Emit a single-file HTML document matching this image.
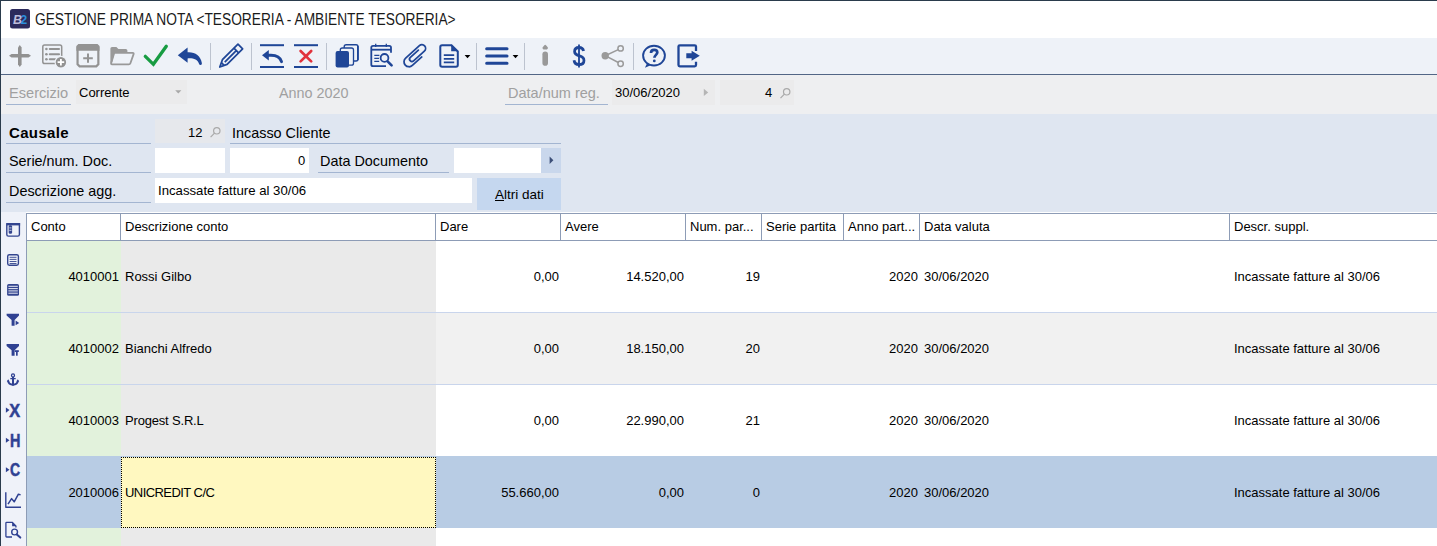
<!DOCTYPE html>
<html><head><meta charset="utf-8">
<style>
*{margin:0;padding:0;box-sizing:border-box}
html,body{width:1437px;height:546px;overflow:hidden;background:#fff;font-family:"Liberation Sans",sans-serif;color:#000}
.a{position:absolute}
.t{position:absolute;white-space:nowrap;line-height:1}
#frameT{left:0;top:0;width:1437px;height:1px;background:#2a3b4c}
#frameL{left:0;top:0;width:1px;height:546px;background:#2a3b4c}
#title{left:1px;top:1px;width:1436px;height:37px;background:#fff}
#tb{left:1px;top:38px;width:1436px;height:36px;background:#eef2f8}
#tbline{left:1px;top:74px;width:1436px;height:1px;background:#526686}
#band{left:1px;top:75px;width:1436px;height:39px;background:#eeeff1}
#form{left:1px;top:114px;width:1436px;height:98px;background:#dfe6f1}
#side{left:1px;top:212px;width:25px;height:334px;background:#eff2f9}
.sep{position:absolute;top:46px;width:1px;height:22px;background:#c3c9d3}
.lbl{font-size:14.4px;color:#000}
.ul{position:absolute;height:1px;background:#a3b5d1}
.g{font-size:13px}
svg{position:absolute;overflow:visible}
</style></head><body>
<div class="a" id="title"></div>
<div class="a" id="tb"></div>
<div class="a" id="tbline"></div>
<div class="a" id="band"></div>
<div class="a" id="form"></div>
<div class="a" id="side"></div>
<div class="a" id="frameT"></div>
<div class="a" id="frameL"></div>

<!-- title -->
<div class="t" style="left:35px;top:12px;font-size:16px;color:#1a1a1a;transform:scaleX(0.858);transform-origin:0 0">GESTIONE PRIMA NOTA &lt;TESORERIA - AMBIENTE TESORERIA&gt;</div>

<!-- toolbar separators -->

<!-- band row -->
<div class="t lbl" style="left:9px;top:86px;color:#a0a0a0;font-size:14.6px">Esercizio</div>
<div class="ul" style="left:6px;top:104px;width:65px"></div>
<div class="a" style="left:76px;top:80px;width:111px;height:24px;background:#ebebec"></div>
<div class="t" style="left:79px;top:86px;font-size:13px">Corrente</div>
<div class="t lbl" style="left:279px;top:86px;color:#a0a0a0">Anno 2020</div>
<div class="t lbl" style="left:508px;top:86px;color:#a0a0a0;font-size:14.5px">Data/num reg.</div>
<div class="ul" style="left:505px;top:104px;width:103px"></div>
<div class="a" style="left:612px;top:80px;width:103px;height:25px;background:#ebebec"></div>
<div class="t" style="left:615px;top:86px;font-size:13px">30/06/2020</div>
<div class="a" style="left:720px;top:80px;width:74px;height:25px;background:#ebebec"></div>
<div class="t" style="left:765px;top:86px;font-size:13px">4</div>

<!-- form -->
<div class="t lbl" style="left:9px;top:125px;font-weight:bold;font-size:15px;letter-spacing:0.35px">Causale</div>
<div class="ul" style="left:6px;top:143px;width:145px"></div>
<div class="t lbl" style="left:9px;top:154px">Serie/num. Doc.</div>
<div class="ul" style="left:6px;top:172px;width:145px"></div>
<div class="t lbl" style="left:9px;top:184px">Descrizione agg.</div>
<div class="ul" style="left:6px;top:202px;width:145px"></div>

<div class="a" style="left:155px;top:119px;width:70px;height:24px;background:#e6e8ec"></div>
<div class="t" style="left:188px;top:126px;font-size:13px">12</div>
<div class="t lbl" style="left:232px;top:126px">Incasso Cliente</div>
<div class="ul" style="left:230px;top:143px;width:331px"></div>

<div class="a" style="left:155px;top:148px;width:70px;height:25px;background:#fff"></div>
<div class="a" style="left:230px;top:148px;width:79px;height:25px;background:#fff"></div>
<div class="t" style="left:298px;top:154px;font-size:13px">0</div>
<div class="t lbl" style="left:320px;top:154px">Data Documento</div>
<div class="ul" style="left:318px;top:172px;width:131px"></div>
<div class="a" style="left:454px;top:148px;width:87px;height:25px;background:#fff"></div>
<div class="a" style="left:541px;top:148px;width:20px;height:25px;background:#c9d7ec"></div>

<div class="a" style="left:155px;top:178px;width:317px;height:25px;background:#fff"></div>
<div class="t" style="left:158px;top:184px;font-size:13.2px">Incassate fatture al 30/06</div>
<div class="a" style="left:477px;top:178px;width:84px;height:32px;background:#c5d7ef"></div>
<div class="t" style="left:495px;top:188px;font-size:13.5px"><u>A</u>ltri dati</div>

<!-- grid -->
<div class="a" style="left:26px;top:213px;width:1px;height:333px;background:#8d9cb6"></div>
<div class="a" style="left:27px;top:213px;width:1410px;height:1px;background:#8d9cb6"></div>
<div class="a" style="left:27px;top:214px;width:1410px;height:26px;background:#fff"></div>
<div class="a" style="left:27px;top:240px;width:1410px;height:1px;background:#8d9cb6"></div>
<div class="a" style="left:120px;top:214px;width:1px;height:26px;background:#8d9cb6"></div>
<div class="a" style="left:435px;top:214px;width:1px;height:26px;background:#8d9cb6"></div>
<div class="a" style="left:560px;top:214px;width:1px;height:26px;background:#8d9cb6"></div>
<div class="a" style="left:685px;top:214px;width:1px;height:26px;background:#8d9cb6"></div>
<div class="a" style="left:761px;top:214px;width:1px;height:26px;background:#8d9cb6"></div>
<div class="a" style="left:843px;top:214px;width:1px;height:26px;background:#8d9cb6"></div>
<div class="a" style="left:919px;top:214px;width:1px;height:26px;background:#8d9cb6"></div>
<div class="a" style="left:1229px;top:214px;width:1px;height:26px;background:#8d9cb6"></div>
<div class="t g" style="left:31px;top:220px">Conto</div>
<div class="t g" style="left:125px;top:220px">Descrizione conto</div>
<div class="t g" style="left:440px;top:220px">Dare</div>
<div class="t g" style="left:565px;top:220px">Avere</div>
<div class="t g" style="left:690px;top:220px">Num. par...</div>
<div class="t g" style="left:766px;top:220px">Serie partita</div>
<div class="t g" style="left:848px;top:220px">Anno part...</div>
<div class="t g" style="left:924px;top:220px">Data valuta</div>
<div class="t g" style="left:1234px;top:220px">Descr. suppl.</div>
<div class="a" style="left:27px;top:241px;width:1410px;height:71px;background:#ffffff"></div>
<div class="a" style="left:27px;top:241px;width:94px;height:71px;background:#e2f2dc"></div>
<div class="a" style="left:121px;top:241px;width:315px;height:71px;background:#eaeaea"></div>
<div class="a" style="left:27px;top:312px;width:1410px;height:1px;background:#c9d5ec"></div>
<div class="a" style="left:27px;top:313px;width:1410px;height:71px;background:#f1f1f1"></div>
<div class="a" style="left:27px;top:313px;width:94px;height:71px;background:#e2f2dc"></div>
<div class="a" style="left:121px;top:313px;width:315px;height:71px;background:#eaeaea"></div>
<div class="a" style="left:27px;top:384px;width:1410px;height:1px;background:#c9d5ec"></div>
<div class="a" style="left:27px;top:385px;width:1410px;height:71px;background:#ffffff"></div>
<div class="a" style="left:27px;top:385px;width:94px;height:71px;background:#e2f2dc"></div>
<div class="a" style="left:121px;top:385px;width:315px;height:71px;background:#eaeaea"></div>
<div class="a" style="left:27px;top:456px;width:1410px;height:1px;background:#c9d5ec"></div>
<div class="a" style="left:27px;top:456px;width:1410px;height:72px;background:#b8cce4"></div>
<div class="a" style="left:121px;top:457px;width:315px;height:71px;background:#fff8c0;border:1px dotted #000"></div>
<div class="a" style="left:27px;top:528px;width:1410px;height:18px;background:#ffffff"></div>
<div class="a" style="left:27px;top:528px;width:94px;height:18px;background:#e2f2dc"></div>
<div class="a" style="left:121px;top:528px;width:315px;height:18px;background:#eaeaea"></div>
<div class="t g" style="right:1318px;top:270px">4010001</div>
<div class="t g" style="left:125px;top:270px">Rossi Gilbo</div>
<div class="t g" style="right:878px;top:270px">0,00</div>
<div class="t g" style="right:753px;top:270px">14.520,00</div>
<div class="t g" style="right:677px;top:270px">19</div>
<div class="t g" style="right:519px;top:270px">2020</div>
<div class="t g" style="left:924px;top:270px">30/06/2020</div>
<div class="t g" style="left:1234px;top:270px">Incassate fatture al 30/06</div>
<div class="t g" style="right:1318px;top:342px">4010002</div>
<div class="t g" style="left:125px;top:342px">Bianchi Alfredo</div>
<div class="t g" style="right:878px;top:342px">0,00</div>
<div class="t g" style="right:753px;top:342px">18.150,00</div>
<div class="t g" style="right:677px;top:342px">20</div>
<div class="t g" style="right:519px;top:342px">2020</div>
<div class="t g" style="left:924px;top:342px">30/06/2020</div>
<div class="t g" style="left:1234px;top:342px">Incassate fatture al 30/06</div>
<div class="t g" style="right:1318px;top:414px">4010003</div>
<div class="t g" style="left:125px;top:414px;letter-spacing:-0.18px">Progest S.R.L</div>
<div class="t g" style="right:878px;top:414px">0,00</div>
<div class="t g" style="right:753px;top:414px">22.990,00</div>
<div class="t g" style="right:677px;top:414px">21</div>
<div class="t g" style="right:519px;top:414px">2020</div>
<div class="t g" style="left:924px;top:414px">30/06/2020</div>
<div class="t g" style="left:1234px;top:414px">Incassate fatture al 30/06</div>
<div class="t g" style="right:1318px;top:486px">2010006</div>
<div class="t g" style="left:125px;top:486px;letter-spacing:-0.56px">UNICREDIT C/C</div>
<div class="t g" style="right:878px;top:486px">55.660,00</div>
<div class="t g" style="right:753px;top:486px">0,00</div>
<div class="t g" style="right:677px;top:486px">0</div>
<div class="t g" style="right:519px;top:486px">2020</div>
<div class="t g" style="left:924px;top:486px">30/06/2020</div>
<div class="t g" style="left:1234px;top:486px">Incassate fatture al 30/06</div>
<!-- icons overlay -->
<svg style="left:0;top:0" width="1437" height="546" viewBox="0 0 1437 546">
<!-- logo -->
<rect x="10" y="9" width="20" height="19.5" rx="2.5" fill="#2b2a5c"/>
<text x="13" y="23.5" font-family="Liberation Sans" font-size="12.5" font-style="italic" font-weight="bold" fill="#bdbcda">B</text>
<text x="20.4" y="23.5" font-family="Liberation Sans" font-size="12" font-weight="bold" fill="#2b8fdb">2</text>
<g fill="#919191" stroke="none">
 <!-- plus -->
 <polygon points="9,55.8 11.5,54 28.5,54 31,55.8 28.5,57.6 11.5,57.6"/>
 <polygon points="19.8,45 21.6,47.5 21.6,64.5 19.8,67 18,64.5 18,47.5"/>
</g>
<!-- list plus -->
<g fill="none" stroke="#929292">
 <path d="M56,63.6 L44.6,63.6 Q42.8,63.6 42.8,61.8 L42.8,46.8 Q42.8,45 44.6,45 L59.9,45 Q61.7,45 61.7,46.8 L61.7,56.5" stroke-width="1.5"/>
 <path d="M49.8,49 L59,49 M49.8,54.2 L59,54.2 M49.8,59.2 L55.2,59.2" stroke-width="2.1" stroke-linecap="round"/>
</g>
<g fill="#929292">
 <circle cx="46.4" cy="49" r="1.3"/><circle cx="46.4" cy="54.2" r="1.3"/><circle cx="46.4" cy="59.2" r="1.3"/>
 <circle cx="60.9" cy="62.2" r="5.8" stroke="#eef2f8" stroke-width="1.2"/>
</g>
<path d="M60.9,58.9 L60.9,65.5 M57.6,62.2 L64.2,62.2" stroke="#fff" stroke-width="1.8"/>
<!-- calendar plus -->
<path d="M79.6,45.25 L96.3,45.25 L98.35,47.3 L98.35,64.3 L96.3,66.35 L79.6,66.35 L77.55,64.3 L77.55,47.3 Z" fill="none" stroke="#939393" stroke-width="2.2"/>
<polygon points="78.4,44.1 97.5,44.1 99.5,46.1 99.5,50.8 76.4,50.8 76.4,46.1" fill="#939393"/>
<path d="M88,53.6 L88,62.8 M83.2,58.2 L92.8,58.2" stroke="#939393" stroke-width="2"/>
<!-- folder -->
<path d="M110.4,63.6 L110.4,48.6 Q110.4,47 112,47 L116.4,47 L118.4,49 L125.8,49 Q127.4,49 127.4,50.6 L127.4,52.2 L114.6,52.2 L112.2,62 Z" fill="#999"/>
<path d="M114.2,52.9 L132.8,52.9 Q134,52.9 133.6,54.1 L130.4,63.2 Q130,64.3 128.8,64.3 L112,64.3 Q110.8,64.3 111.2,63.1 Z" fill="none" stroke="#999" stroke-width="1.8"/>
<!-- check -->
<polyline points="145.3,56.3 153.4,64.3 166.3,46.3" fill="none" stroke="#179c42" stroke-width="3.3" stroke-linecap="round" stroke-linejoin="miter"/>
<!-- undo -->
<path d="M177.8,55.2 L187.6,47.6 L187.6,52.3 C194.8,51.8 200.6,55.4 201.9,63.2 Q202.1,64.9 200.6,65 Q199.4,65.1 199.1,63.9 C197.6,59.6 193.6,58 187.6,58.4 L187.6,62.7 Z" fill="#1f4697"/>
<!-- separators -->
<g fill="#bcc3cf">
 <rect x="210" y="43" width="1" height="27"/>
 <rect x="251" y="43" width="1" height="27"/>
 <rect x="326" y="43" width="1" height="27"/>
 <rect x="476" y="43" width="1" height="27"/>
 <rect x="524" y="43" width="1" height="27"/>
 <rect x="633" y="43" width="1" height="27"/>
</g>
<!-- pencil -->
<g transform="translate(219.8,67) rotate(-45)" fill="none" stroke="#1f4697" stroke-width="1.75" stroke-linejoin="round">
 <path d="M0,0 L7,-3.3 L29,-3.3 L29,3.3 L7,3.3 Z"/>
 <path d="M23.3,-3.3 L23.3,3.3 M7,0 L23.3,0 M4.2,-2 L4.2,2"/>
</g>
<!-- undo lines -->
<g fill="#1f4697">
 <rect x="260" y="44.2" width="24" height="2"/>
 <rect x="260" y="66" width="24" height="2"/>
 <polygon points="262,55.2 268.8,50 268.8,60.4"/>
 <path d="M268,55.3 C274.5,54.6 280,56.5 281.5,61.6" fill="none" stroke="#1f4697" stroke-width="3" stroke-linecap="round"/>
 <rect x="294" y="44.2" width="24" height="2"/>
 <rect x="294" y="66" width="24" height="2"/>
</g>
<path d="M300.6,51 L311.2,61.4 M311.2,51 L300.6,61.4" stroke="#e1333d" stroke-width="2.7" stroke-linecap="round"/>
<!-- copies -->
<rect x="344.2" y="44.8" width="13.8" height="16.2" rx="2" fill="#eef2f8" stroke="#1f4697" stroke-width="1.4"/>
<rect x="357" y="46" width="1.7" height="14" fill="#1f4697"/>
<rect x="340.3" y="48" width="13.2" height="17.2" rx="2" fill="#eef2f8" stroke="#1f4697" stroke-width="1.3"/>
<rect x="335.6" y="51.1" width="13.4" height="16.5" rx="2" fill="#1f4697"/>
<!-- calendar search -->
<g fill="none" stroke="#1f4697">
 <path d="M386,66.2 L373,66.2 Q371.3,66.2 371.3,64.5 L371.3,47.5 Q371.3,45.8 373,45.8 L389.3,45.8 Q391,45.8 391,47.5 L391,52.8" stroke-width="1.8"/>
 <path d="M371.3,49.7 L391,49.7" stroke-width="1.8"/>
 <path d="M375.7,43.8 L375.7,47 M386.3,43.8 L386.3,47" stroke-width="1.3"/>
 <path d="M374.3,55.4 L379.4,55.4 M374.3,58.3 L379,58.3 M374.3,61.4 L379.2,61.4" stroke-width="1.3"/>
 <circle cx="384.5" cy="57.9" r="3.9" stroke-width="1.8"/>
 <path d="M387.6,61.3 L391.6,65.3" stroke-width="2.6" stroke-linecap="round"/>
</g>
<!-- paperclip -->
<g transform="translate(409,61.75) rotate(-42)" fill="none" stroke="#1f4697" stroke-width="1.75" stroke-linecap="round">
 <path d="M12.7,5 L0,5 A5,5 0 0 1 0,-5 L18.5,-5 A3.7,3.7 0 0 1 18.5,2.4 L4,2.4 A2.4,2.4 0 0 1 4,-2.4 L14.8,-2.4"/>
</g>
<!-- doc -->
<path d="M440.3,47 Q440.3,45.2 442.1,45.2 L451.5,45.2 L457.8,51.5 L457.8,65 Q457.8,66.8 456,66.8 L442.1,66.8 Q440.3,66.8 440.3,65 Z" fill="none" stroke="#1f4697" stroke-width="2"/>
<path d="M451.2,44.6 L451.2,51.2 L458.2,51.2 Z" fill="#1f4697"/>
<path d="M443.8,55.1 L454.2,55.1 M443.8,58.8 L454.2,58.8 M443.8,62.3 L454.2,62.3" stroke="#1f4697" stroke-width="1.8"/>
<polygon points="464.6,55 470.4,55 467.5,58.3" fill="#000"/>
<!-- hamburger -->
<path d="M486.7,48.7 L507,48.7 M486.7,56 L507,56 M486.7,63.3 L507,63.3" stroke="#1f4697" stroke-width="3.1" stroke-linecap="round"/>
<polygon points="512.6,55 518.4,55 515.5,58.3" fill="#000"/>
<!-- info -->
<g fill="#999">
 <path d="M545.2,44.8 Q545.6,44.8 546,45.3 L547.9,47.6 Q548.1,49.4 546.8,49.4 L543.6,49.4 Q542.3,49.4 542.5,47.6 L544.4,45.3 Q544.8,44.8 545.2,44.8 Z"/>
 <rect x="542.4" y="51.5" width="5.6" height="14.2" rx="2.8"/>
</g>
<!-- dollar -->
<g fill="none" stroke="#1f4697" transform="translate(579,0) scale(0.92,1) translate(-579,0)">
 <path d="M579,44.5 L579,67.5" stroke-width="2"/>
 <path d="M584,51 C583.4,48.6 581.6,47.6 579,47.6 C575.8,47.6 574.2,49.4 574.2,51.6 C574.2,54.8 577.5,55.4 579.6,55.9 C582.6,56.6 584.4,57.8 584.4,60.4 C584.4,63 582.4,64.5 579,64.5 C575.8,64.5 574,63 573.6,60.2" stroke-width="3"/>
</g>
<!-- share -->
<g fill="none" stroke="#9a9a9a" stroke-width="1.5">
 <path d="M605.2,55.7 L618.3,49.6 M605.2,55.7 L618.3,62.5"/>
 <circle cx="620.6" cy="48.4" r="2.7"/>
 <circle cx="620.6" cy="63.7" r="2.7"/>
</g>
<circle cx="605.2" cy="55.7" r="3.7" fill="#9a9a9a"/>
<!-- help -->
<g fill="none" stroke="#1f4697">
 <ellipse cx="654" cy="55.6" rx="10.9" ry="9.9" stroke-width="1.9"/>
 <path d="M651,52.9 C651,50.8 652.4,49.8 654.2,49.8 C656,49.8 657.3,50.9 657.3,52.6 C657.3,54.7 654.4,55.2 654.4,57.8" stroke-width="2.7"/>
</g>
<circle cx="654.3" cy="60.9" r="1.4" fill="#1f4697"/>
<path d="M647,63.2 L645,67.8 L651.2,65.1 Z" fill="#1f4697"/>
<!-- exit -->
<path d="M696,51 L696,46.6 Q696,45.3 694.7,45.3 L679.8,45.3 Q678.5,45.3 678.5,46.6 L678.5,65.1 Q678.5,66.4 679.8,66.4 L694.7,66.4 Q696,66.4 696,65.1 L696,61.7" fill="none" stroke="#1f4697" stroke-width="2.3"/>
<path d="M686.3,53.2 L691.6,53.2 L691.6,50.8 L699.8,55.8 L691.6,60.8 L691.6,58.3 L686.3,58.3 Z" fill="#1f4697"/>

<!-- sidebar icons -->
<g fill="none" stroke="#33458f">
 <rect x="6.8" y="223.7" width="12.6" height="12.4" rx="1.6" stroke-width="1.4"/>
 <rect x="7.7" y="254.7" width="10.7" height="10.5" rx="1.6" stroke-width="1.4"/>
 <path d="M9.6,257.3 L16.5,257.3 M9.6,259.4 L16.5,259.4 M9.6,261.5 L16.5,261.5 M9.6,263.5 L16.5,263.5" stroke-width="0.9"/>
</g>
<g fill="#33458f">
 <rect x="6.2" y="223" width="14" height="2.4"/>
 <rect x="8.7" y="225.2" width="3.4" height="8.6" rx="1.3"/>
 <rect x="7.1" y="284" width="11.9" height="11.8" rx="1.6"/>
</g>
<path d="M9.3,227.9 L11.5,227.9 M9.3,230.3 L11.5,230.3" stroke="#eef2f9" stroke-width="0.8"/>
<g fill="#e6e9f4"><rect x="8.4" y="285.8" width="9.4" height="1"/><rect x="8.4" y="288.1" width="9.4" height="1"/><rect x="8.4" y="290.4" width="9.4" height="1"/><rect x="8.4" y="292.7" width="9.4" height="1"/></g>
<g fill="#2f4192">
 <polygon points="6.6,313.7 19,313.7 19,315.6 14.6,320 14.6,325.8 11.6,325.8 11.6,320 6.6,315.6"/>
 <polygon points="15.6,320.6 19.2,322.9 15.6,325.2"/>
 <polygon points="6.6,344 19,344 19,345.9 14.6,350.3 14.6,355.7 11.6,355.7 11.6,350.3 6.6,345.9"/>
 <rect x="14.8" y="350.2" width="4" height="1.8"/>
 <rect x="16" y="351.5" width="1.7" height="4.2"/>
</g>
<!-- anchor -->
<g fill="none" stroke="#2f4192">
 <circle cx="13" cy="375.4" r="1.5" stroke-width="1.3"/>
 <path d="M13,377 L13,385.6" stroke-width="2"/>
 <path d="M10.3,378.6 L15.7,378.6" stroke-width="1.3"/>
 <path d="M8,380.6 A5.1,5.1 0 0 0 18,380.6" stroke-width="2"/>
</g>
<g fill="#2f4192">
 <polygon points="6.8,381.6 8.2,379.2 9.6,381.6"/>
 <polygon points="16.4,381.6 17.8,379.2 19.2,381.6"/>
 <polygon points="5.9,407.5 9.5,410.1 5.9,412.7"/>
 <polygon points="5.9,437.8 9.5,440.3 5.9,442.8"/>
 <polygon points="5.9,467.3 9.5,469.8 5.9,472.3"/>
</g>
<g font-family="Liberation Sans" font-weight="bold" fill="#2f4192" stroke="#2f4192" stroke-width="0.5">
 <text x="0" y="0" font-size="19" transform="translate(9.2,416.8) scale(0.86,1)">X</text>
 <text x="0" y="0" font-size="18" transform="translate(10,446.7) scale(0.8,1)">H</text>
 <text x="0" y="0" font-size="18.4" transform="translate(9.9,476.4) scale(0.76,1)">C</text>
</g>
<!-- chart -->
<g fill="none" stroke="#2f4192" stroke-linejoin="round">
 <path d="M5.8,492.2 L5.8,507.3 L21,507.3" stroke-width="1.4"/>
 <path d="M8,504.2 L11.6,498.6 L14.2,501.8 L18.4,494.2 L20.6,494.9" stroke-width="1.5"/>
</g>
<!-- doc search -->
<g fill="none" stroke="#2f4192">
 <path d="M12,537 L6.6,537 Q5.9,537 5.9,536.3 L5.9,523.1 Q5.9,522.4 6.6,522.4 L12.4,522.4 L15.9,525.9 L15.9,527.6" stroke-width="1.3"/>
 <circle cx="14.6" cy="532" r="2.9" stroke-width="1.4"/>
 <path d="M16.8,534.4 L20.3,537.6" stroke-width="2" stroke-linecap="round"/>
</g>
<path d="M12.1,522 L12.1,526.2 L16.3,526.2 Z" fill="#2f4192"/>
<!-- small field icons -->
<g fill="none" stroke="#a9a9a9" stroke-width="1.2">
 <circle cx="216.8" cy="130.8" r="3.2"/>
 <path d="M214.5,133.2 L210.6,137.1"/>
 <circle cx="786.7" cy="91.8" r="3.2"/>
 <path d="M784.4,94.2 L780.5,98.1"/>
</g>
<polygon points="175.2,90.2 181.4,90.2 178.3,93.5" fill="#a8a8a8"/>
<polygon points="703.8,88.8 708.2,92.4 703.8,96" fill="#b5b5b5"/>
<polygon points="549.6,156.4 553.4,160.2 549.6,164" fill="#3c4f78"/>
</svg>
</body></html>
